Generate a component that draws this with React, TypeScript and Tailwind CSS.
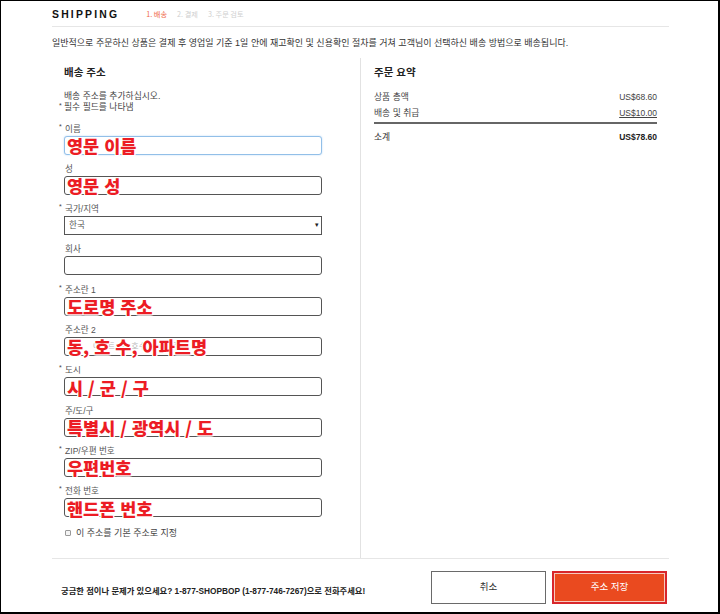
import React from "react";

type FieldProps = {
  label: string;
  req?: boolean;
  note?: string;
  placeholder?: string;
  focused?: boolean;
  select?: boolean;
};

function Field({ label, req, note, placeholder, focused, select }: FieldProps) {
  return (
    <div className="flex flex-col">
      <div className="relative h-[13px] pl-[1px] text-[8.6px] leading-[12px] text-[#555]">
        {req && (
          <span className="absolute -left-[5px] top-[-2px] text-[7px] text-[#444]">*</span>
        )}
        {label}
      </div>
      {select ? (
        <div className="flex h-[19px] w-[258px] items-center justify-between border border-[#555] bg-white pl-[4px] pr-[2px] text-[8.6px] text-[#555]">
          <span>한국</span>
          <span className="text-[7px] text-[#222]">▾</span>
        </div>
      ) : (
        <div
          className={
            focused
              ? "relative h-[19px] w-[258px] rounded-[3px] border border-[#92bfe8] bg-white shadow-[0_0_2px_#b7d8f5]"
              : "relative h-[19px] w-[258px] rounded-[3px] border border-[#555] bg-white"
          }
        >
          {placeholder && (
            <span className="absolute left-[28px] top-[4px] text-[8px] leading-[10px] text-[#b8b8b8]">
              {placeholder}
            </span>
          )}
          {note && (
            <span className="absolute left-[2px] top-1/2 -translate-y-[45%] whitespace-nowrap font-['Noto_Sans_CJK_KR',sans-serif] text-[17.5px] font-black leading-none text-[#ec1c24] [word-spacing:1px] [text-shadow:-1px_-1px_0_#fff,1px_-1px_0_#fff,-1px_1px_0_#fff,1px_1px_0_#fff,0_1px_0_#fff,0_-1px_0_#fff,1px_0_0_#fff,-1px_0_0_#fff]">
              {note}
            </span>
          )}
        </div>
      )}
    </div>
  );
}

export default function App() {
  return (
    <div className="h-[614px] w-[720px] overflow-hidden border-t border-l border-r-2 border-b-2 border-black bg-white font-['Liberation_Sans','Noto_Sans_CJK_KR',sans-serif] text-[#333]">
      <div className="ml-[51px] w-[617px]">
        {/* Header */}
        <div className="flex h-[26px] items-center border-b border-[#e6e6e6] pt-[2px]">
          <span className="text-[10.4px] font-bold tracking-[2.2px] text-[#111]">SHIPPING</span>
          <div className="ml-[27px] flex gap-[10px] font-['Noto_Sans_CJK_KR',sans-serif] text-[7.2px]">
            <span className="text-[#ef6a4a]">1. 배송</span>
            <span className="text-[#cfcfcf]">2. 결제</span>
            <span className="text-[#cfcfcf]">3. 주문 검토</span>
          </div>
        </div>

        {/* Info */}
        <div className="pt-[9.5px] text-[9px] leading-[12px] text-[#333]">
          일반적으로 주문하신 상품은 결제 후 영업일 기준 1일 안에 재고확인 및 신용확인 절차를 거쳐 고객님이 선택하신 배송 방법으로 배송됩니다.
        </div>

        {/* Columns */}
        <div className="mt-[9.5px] flex h-[501px] border-b border-[#e6e6e6]">
          <div className="w-[309px] border-r border-[#e2e2e2] pl-[12px] pt-[7px]">
            <div className="text-[10.5px] font-bold leading-[14px] text-[#222]">배송 주소</div>
            <div className="mt-[12px] text-[8.8px] leading-[11px] text-[#444]">배송 주소를 추가하십시오.</div>
            <div className="relative text-[8.8px] leading-[11px] text-[#444]">
              <span className="absolute -left-[5px] top-[-2px] text-[7px]">*</span>
              필수 필드를 나타냄
            </div>
            <div className="mt-[9.5px] flex flex-col gap-[8.3px]">
              <Field label="이름" req focused note="영문 이름" />
              <Field label="성" note="영문 성" />
              <Field label="국가/지역" req select />
              <Field label="회사" />
              <Field label="주소란 1" req note="도로명 주소" />
              <Field label="주소란 2" placeholder="아파트, 동, 호수 등 상세주소" note="동, 호 수, 아파트명" />
              <Field label="도시" req note="시 / 군 / 구" />
              <Field label="주/도/구" note="특별시 / 광역시 / 도" />
              <Field label="ZIP/우편 번호" req note="우편번호" />
              <Field label="전화 번호" req note="핸드폰 번호" />
            </div>
            <div className="mt-[10px] flex h-[12px] items-center gap-[5px] pl-[1px]">
              <span className="h-[6px] w-[6px] rounded-[1px] border border-[#999] bg-[#f4f4f4]" />
              <span className="text-[9px] leading-[12px] text-[#444]">이 주소를 기본 주소로 지정</span>
            </div>
          </div>

          <div className="flex-1 pl-[13px] pr-[12px] pt-[7px]">
            <div className="text-[10.5px] font-bold leading-[14px] text-[#222]">주문 요약</div>
            <div className="mt-[10.7px] flex h-[16px] items-center justify-between text-[8.8px] text-[#444]">
              <span>상품 총액</span>
              <span className="text-[8.5px]">US$68.60</span>
            </div>
            <div className="flex h-[16px] items-center justify-between text-[8.8px] text-[#444]">
              <span>배송 및 취급</span>
              <span className="text-[8.5px] underline">US$10.00</span>
            </div>
            <div className="h-[2px] bg-[#666]" />
            <div className="mt-[6px] flex h-[16px] items-center justify-between text-[8.8px] text-[#333]">
              <span>소계</span>
              <span className="text-[8.5px] font-bold text-[#222]">US$78.60</span>
            </div>
          </div>
        </div>

        {/* Footer */}
        <div className="flex items-start justify-between pt-[12px] pr-[2px]">
          <div className="flex h-[33px] items-center pl-[9px]">
            <span className="pt-[7px] text-[8.3px] font-bold leading-[12px] text-[#222]">
              궁금한 점이나 문제가 있으세요? 1-877-SHOPBOP (1-877-746-7267)으로 전화주세요!
            </span>
          </div>
          <div className="flex gap-[6px]">
            <div className="flex h-[33px] w-[115px] items-center justify-center border-[1.5px] border-[#6a6a6a] bg-white text-[9.5px] text-[#333]">
              취소
            </div>
            <div className="flex h-[33px] w-[115px] items-center justify-center border-2 border-[#d8262b] bg-[#ea4a1f] text-[9.5px] text-white shadow-[inset_0_0_0_1px_#f7c9bd]">
              주소 저장
            </div>
          </div>
        </div>
      </div>
    </div>
  );
}
